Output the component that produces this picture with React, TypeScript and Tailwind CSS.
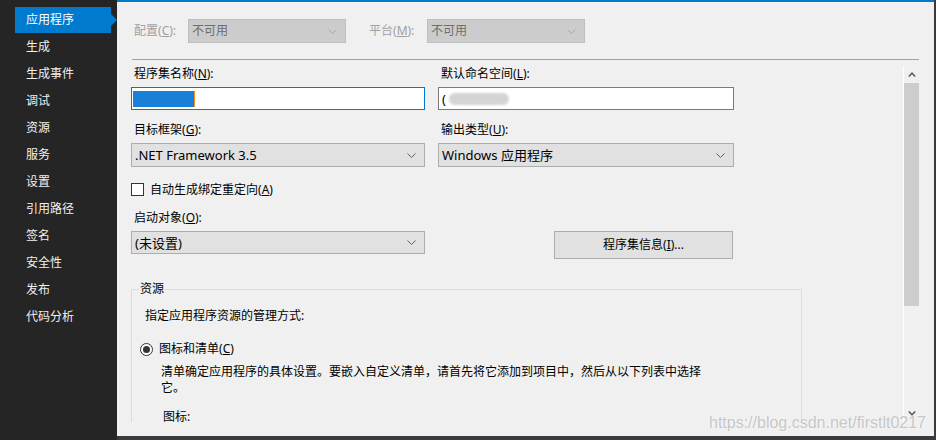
import React from "react";

const navItems = [
  "应用程序",
  "生成",
  "生成事件",
  "调试",
  "资源",
  "服务",
  "设置",
  "引用路径",
  "签名",
  "安全性",
  "发布",
  "代码分析",
];

function Chevron({ className = "" }: { className?: string }) {
  return (
    <svg width="9" height="5" viewBox="0 0 9 5" className={className}>
      <polyline points="0.5,0.5 4.5,4.5 8.5,0.5" fill="none" stroke="currentColor" strokeWidth="1" />
    </svg>
  );
}

function Mn({ text, letter, tail = "):" }: { text: string; letter: string; tail?: string }) {
  return (
    <>
      {text}(<u>{letter}</u>
      {tail}
    </>
  );
}

function Combo({ value, disabled = false, className = "" }: { value: string; disabled?: boolean; className?: string }) {
  return (
    <div
      className={`flex items-center justify-between border pl-[3px] pr-[8px] ${
        disabled
          ? "border-[#bfbfbf] bg-[#cccccc] text-[12px] text-[#6d6d6d]"
          : "border-[#adadad] bg-[#e1e1e1] text-[13px] text-black"
      } ${className}`}
    >
      <span className="leading-[16px]">{value}</span>
      <Chevron className={disabled ? "text-[#a8a8a8]" : "text-[#606060]"} />
    </div>
  );
}

function Label({ children, className = "" }: { children: React.ReactNode; className?: string }) {
  return <div className={`h-[16px] pl-[3px] text-[12px] leading-[16px] text-black ${className}`}>{children}</div>;
}

export default function App() {
  return (
    <div className="flex h-[440px] w-[936px] overflow-hidden bg-[#3a3a3d] font-['Noto_Sans','Noto_Sans_CJK_SC',sans-serif]">
      {/* left nav */}
      <aside className="flex h-[440px] w-[117px] flex-col gap-px bg-[#252526] pt-[7px]">
        {navItems.map((item, i) =>
          i === 0 ? (
            <div key={item} className="flex h-[26px] items-center pl-[15px]">
              <div className="flex h-[26px] w-[96px] items-center bg-[#007acc] pl-[11px] text-[12px] text-white">
                {item}
              </div>
              <svg width="6" height="12" viewBox="0 0 6 12">
                <polygon points="0,0 6,6 0,12" fill="#007acc" />
              </svg>
            </div>
          ) : (
            <div key={item} className="flex h-[26px] items-center pl-[26px] text-[12px] text-[#f1f1f1]">
              {item}
            </div>
          )
        )}
      </aside>

      {/* main page */}
      <main className="relative flex h-[436px] w-[817px] flex-col border-t-2 border-[#007acc] bg-[#f0f0f0]">
        {/* config / platform */}
        <div className="flex items-center pl-[17px] pt-[17px] text-[12px]">
          <span className="w-[54px] text-[#a0a0a0]">
            <Mn text="配置" letter="C" />
          </span>
          <Combo value="不可用" disabled className="h-[24px] w-[158px]" />
          <span className="ml-[23px] w-[58px] text-[#a0a0a0]">
            <Mn text="平台" letter="M" />
          </span>
          <Combo value="不可用" disabled className="h-[24px] w-[158px]" />
        </div>

        <div className="mx-[15px] mt-[16px] h-px bg-[#a0a0a0]" />

        {/* scrolling area */}
        <div className="mt-[6px] mr-[14px] flex h-[356px]">
          <div className="flex flex-1 flex-col overflow-hidden pl-[14px]">
            <div className="flex gap-[13px]">
              <div className="flex w-[294px] flex-col gap-[5px]">
                <Label>
                  <Mn text="程序集名称" letter="N" />
                </Label>
                <div className="flex h-[23px] items-center border border-[#0078d7] bg-white pl-px">
                  <span className="h-[16px] w-[61px] bg-[#1a7fd6] blur-[0.6px]" />
                  <span className="h-[16px] w-px bg-[#f08a24]" />
                </div>
              </div>
              <div className="flex w-[296px] flex-col gap-[5px]">
                <Label>
                  <Mn text="默认命名空间" letter="L" />
                </Label>
                <div className="flex h-[23px] items-center border border-[#7a7a7a] bg-white pl-[3px] text-[13px]">
                  <span className="leading-[16px]">(</span>
                  <span className="ml-[3px] h-[12px] w-[60px] rounded-full bg-[#d4d4d4] blur-[1px]" />
                </div>
              </div>
            </div>

            <div className="mt-[12px] flex gap-[13px]">
              <div className="flex w-[294px] flex-col gap-[5px]">
                <Label>
                  <Mn text="目标框架" letter="G" />
                </Label>
                <Combo value=".NET Framework 3.5" className="h-[24px]" />
              </div>
              <div className="flex w-[296px] flex-col gap-[5px]">
                <Label>
                  <Mn text="输出类型" letter="U" />
                </Label>
                <Combo value="Windows 应用程序" className="h-[24px]" />
              </div>
            </div>

            <div className="mt-[15px] flex h-[15px] items-center gap-[6px] text-[12px]">
              <span className="h-[13px] w-[13px] border border-[#333333] bg-white" />
              <span className="leading-[16px]">
                <Mn text="自动生成绑定重定向" letter="A" tail=")" />
              </span>
            </div>

            <div className="mt-[13px] flex items-start gap-[13px]">
              <div className="flex w-[294px] flex-col gap-[5px]">
                <Label>
                  <Mn text="启动对象" letter="O" />
                </Label>
                <Combo value="(未设置)" className="h-[23px]" />
              </div>
              <div className="flex w-[296px] justify-end pt-[21px]">
                <button className="mr-px flex h-[28px] w-[179px] items-center justify-center border border-[#adadad] bg-[#e1e1e1] text-[12px]">
                  <Mn text="程序集信息" letter="I" tail=")..." />
                </button>
              </div>
            </div>

            <fieldset className="mt-[22px] w-[671px] shrink-0 border border-[#dcdcdc] pb-[40px] text-[12px]">
              <legend className="ml-[7px] px-px leading-[16px]">资源</legend>
              <div className="mt-[11px] pl-[13px] leading-[16px]">指定应用程序资源的管理方式:</div>
              <div className="mt-[17px] flex h-[16px] items-center gap-[6px] pl-[8px]">
                <span className="flex h-[13px] w-[13px] items-center justify-center rounded-full border border-[#333333] bg-white">
                  <span className="h-[7px] w-[7px] rounded-full bg-[#333333]" />
                </span>
                <span className="leading-[16px]">
                  <Mn text="图标和清单" letter="C" tail=")" />
                </span>
              </div>
              <p className="mt-[7px] w-[546px] pl-[29px] leading-[16px] box-content">
                清单确定应用程序的具体设置。要嵌入自定义清单，请首先将它添加到项目中，然后从以下列表中选择它。
              </p>
              <div className="mt-[13px] pl-[31px] leading-[16px]">图标:</div>
            </fieldset>
          </div>

          {/* scrollbar */}
          <div className="flex w-[17px] flex-col border-l border-white">
            <div className="flex h-[17px] items-center justify-center text-[#606060]">
              <svg width="8" height="5" viewBox="0 0 8 5">
                <polyline points="0.8,4.5 4,1.2 7.2,4.5" fill="none" stroke="currentColor" strokeWidth="1.6" />
              </svg>
            </div>
            <div className="mr-px h-[223px] bg-[#cdcdcd]" />
            <div className="flex-1" />
            <div className="flex h-[17px] items-center justify-center text-[#606060]">
              <svg width="8" height="5" viewBox="0 0 8 5">
                <polyline points="0.8,0.5 4,3.8 7.2,0.5" fill="none" stroke="currentColor" strokeWidth="1.6" />
              </svg>
            </div>
          </div>
        </div>

        {/* csdn watermark */}
        <div className="pointer-events-none absolute right-[8px] bottom-[3px] font-['Liberation_Sans',Arial,sans-serif] text-[16px] leading-[20px] text-[#c6c6c6] [text-shadow:0_0_2px_#ffffff]">
          https://blog.csdn.net/firstlt0217
        </div>
      </main>
    </div>
  );
}
